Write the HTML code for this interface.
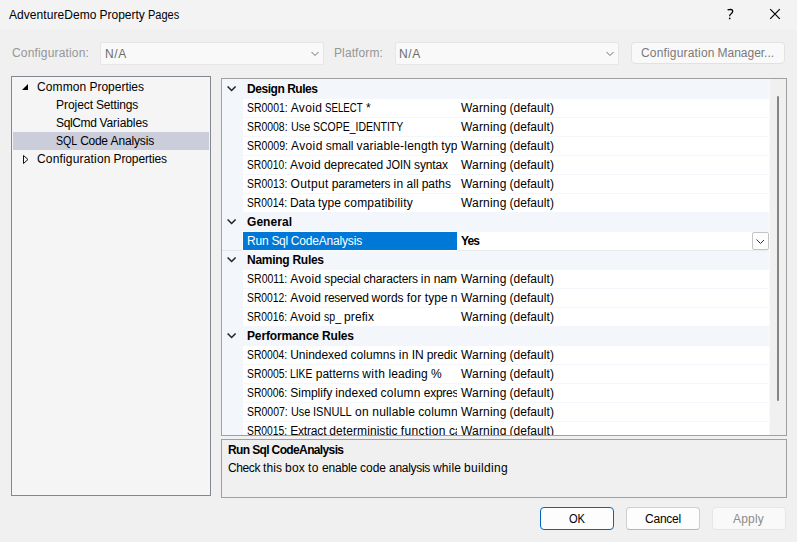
<!DOCTYPE html>
<html><head><meta charset="utf-8">
<style>
*{margin:0;padding:0;box-sizing:border-box}
html,body{width:797px;height:542px;overflow:hidden;background:#f0f0f0;font-family:"Liberation Sans",sans-serif;font-size:12px;color:#000;position:relative}
.a{position:absolute;white-space:nowrap}
.t{position:absolute;white-space:nowrap;line-height:18px;height:18px}
.combo{position:absolute;top:42px;height:23px;background:#f9f9f9;border:1px solid #e6e6e6;border-radius:2px}
.btn{position:absolute;border-radius:4px;background:#fdfdfd;border:1px solid #d0d0d0}
#tree{left:11px;top:76px;width:200px;height:420px;border:1px solid #828790;background:#f5f5f5}
#grid{left:221px;top:78px;width:566px;height:358px;border:1px solid #a0a0a0;background:#f3f6fb;overflow:hidden}
#desc{left:221px;top:439px;width:566px;height:59px;border:1px solid #a0a0a0;background:#f0f0f0}
.row{position:absolute;left:21px;width:526px;height:18px;background:#fff}
.nm{position:absolute;left:0;top:0;width:214px;height:18px;overflow:hidden}
.vl{position:absolute;left:215px;top:0;width:311px;height:18px;overflow:hidden}
.cat{position:absolute;left:0;width:547px;height:18px}
.w{position:absolute;top:0;display:inline-block;transform-origin:0 0;white-space:nowrap}
</style></head><body>

<div class="a" style="left:0;top:0;width:797px;height:30px;background:#f3f3f3"></div>
<div class="t" style="left:9px;top:6px;width:1px;"><span class="w" style="left:0.00px;letter-spacing:0.062px">AdventureDemo</span><span class="w" style="left:90.53px;letter-spacing:-0.010px">Property</span><span class="w" style="left:138.82px;transform:scaleX(0.9167)">Pages</span></div>
<svg class="a" style="left:722px;top:5px" width="18" height="18"><path d="M5.6 4.9Q7 4.3 8.7 4.3Q10.7 4.4 10.7 6.4Q10.6 7.8 8.9 8.9Q7.6 9.8 7.6 11.2" stroke="#000" stroke-width="1.25" fill="none"/><circle cx="7.7" cy="13.4" r="0.85" fill="#000"/></svg>
<svg class="a" style="left:769px;top:8px" width="12" height="12"><path d="M1.2 1.2L10.8 10.8M10.8 1.2L1.2 10.8" stroke="#000" stroke-width="1.2" fill="none"/></svg>
<div class="t" style="left:12px;top:44px;width:1px;color:#969696;"><span class="w" style="left:0.00px;letter-spacing:0.164px">Configuration:</span></div>
<div class="combo" style="left:100px;width:224px"></div>
<div class="t" style="left:105px;top:45px;width:1px;color:#6d6d6d;"><span class="w" style="left:0.00px;letter-spacing:0.667px">N/A</span></div>
<svg class="a" style="left:310px;top:50px" width="11" height="7"><path d="M1.5 2L5 5.5L8.5 2" stroke="#707070" stroke-width="1" fill="none"/></svg>
<div class="t" style="left:334px;top:44px;width:1px;color:#969696;"><span class="w" style="left:0.00px;letter-spacing:0.111px">Platform:</span></div>
<div class="combo" style="left:395px;width:224px"></div>
<div class="t" style="left:399px;top:45px;width:1px;color:#6d6d6d;"><span class="w" style="left:0.00px;letter-spacing:0.667px">N/A</span></div>
<svg class="a" style="left:605px;top:50px" width="11" height="7"><path d="M1.5 2L5 5.5L8.5 2" stroke="#707070" stroke-width="1" fill="none"/></svg>
<div class="btn" style="left:631px;top:42px;width:154px;height:22px;border-color:#e2e2e2;background:#f9f9f9"></div>
<div class="t" style="left:641px;top:44px;width:1px;color:#7a7a7a;"><span class="w" style="left:0.00px;letter-spacing:0.168px">Configuration</span><span class="w" style="left:76.58px;letter-spacing:-0.026px">Manager...</span></div>
<div id="tree" class="a">
<div class="a" style="left:1px;top:55px;width:196px;height:18px;background:#cbcdda"></div>
<svg class="a" style="left:9px;top:7px" width="8" height="8"><path d="M7 0L7 6L1 6Z" fill="#000"/></svg>
<div class="t" style="left:25px;top:1px;width:1px;"><span class="w" style="left:0.00px;letter-spacing:0.116px">Common</span><span class="w" style="left:52.47px;letter-spacing:-0.016px">Properties</span></div>
<div class="t" style="left:44px;top:19px;width:1px;"><span class="w" style="left:0.00px;letter-spacing:-0.049px">Project</span><span class="w" style="left:40.00px;letter-spacing:-0.168px">Settings</span></div>
<div class="t" style="left:44px;top:37px;width:1px;"><span class="w" style="left:0.00px;letter-spacing:-0.375px">SqlCmd</span><span class="w" style="left:43.47px;letter-spacing:-0.068px">Variables</span></div>
<div class="t" style="left:44px;top:55px;width:1px;"><span class="w" style="left:0.00px;transform:scaleX(0.8840)">SQL</span><span class="w" style="left:24.25px;letter-spacing:-0.352px">Code</span><span class="w" style="left:54.56px;letter-spacing:-0.156px">Analysis</span></div>
<svg class="a" style="left:10px;top:78px" width="8" height="10"><path d="M1.5 0.5L6 4.5L1.5 8.5Z" stroke="#111" stroke-width="1" fill="none"/></svg>
<div class="t" style="left:25px;top:73px;width:1px;"><span class="w" style="left:0.00px;letter-spacing:0.169px">Configuration</span><span class="w" style="left:76.59px;letter-spacing:-0.128px">Properties</span></div>
</div>
<div id="grid" class="a">
<div class="cat" style="top:1px"><svg class="a" style="left:5px;top:6px" width="11" height="7"><path d="M0.6 0.5L4.6 4.5L8.6 0.5" stroke="#222" stroke-width="1.5" fill="none"/></svg><div class="t" style="left:25px;top:0px;letter-spacing:-0.455px;font-weight:bold;">Design Rules</div></div>
<div class="row" style="top:20px"><div class="nm"><div class="t" style="left:4px;top:0px;width:1px;"><span class="w" style="left:0.00px;transform:scaleX(0.8708)">SR0001:</span><span class="w" style="left:43.70px;letter-spacing:0.342px">Avoid</span><span class="w" style="left:78.26px;transform:scaleX(0.8058)">SELECT</span><span class="w" style="left:118.92px;letter-spacing:0.410px">*</span></div></div><div class="vl"><div class="t" style="left:3px;top:0px;width:1px;"><span class="w" style="left:0.00px;letter-spacing:0.180px">Warning</span><span class="w" style="left:48.48px;letter-spacing:0.056px">(default)</span></div></div></div>
<div class="row" style="top:39px"><div class="nm"><div class="t" style="left:4px;top:0px;width:1px;"><span class="w" style="left:0.00px;transform:scaleX(0.8679)">SR0008:</span><span class="w" style="left:43.56px;transform:scaleX(0.9018)">Use</span><span class="w" style="left:65.84px;transform:scaleX(0.8725)">SCOPE_IDENTITY</span></div></div><div class="vl"><div class="t" style="left:3px;top:0px;width:1px;"><span class="w" style="left:0.00px;letter-spacing:0.180px">Warning</span><span class="w" style="left:48.48px;letter-spacing:0.056px">(default)</span></div></div></div>
<div class="row" style="top:58px"><div class="nm"><div class="t" style="left:4px;top:0px;width:1px;"><span class="w" style="left:0.00px;transform:scaleX(0.8764)">SR0009:</span><span class="w" style="left:43.99px;letter-spacing:0.383px">Avoid</span><span class="w" style="left:78.77px;letter-spacing:-0.079px">small</span><span class="w" style="left:109.45px;letter-spacing:0.208px">variable-length</span><span class="w" style="left:194.36px;letter-spacing:-0.006px">types</span></div></div><div class="vl"><div class="t" style="left:3px;top:0px;width:1px;"><span class="w" style="left:0.00px;letter-spacing:0.180px">Warning</span><span class="w" style="left:48.48px;letter-spacing:0.056px">(default)</span></div></div></div>
<div class="row" style="top:77px"><div class="nm"><div class="t" style="left:4px;top:0px;width:1px;"><span class="w" style="left:0.00px;transform:scaleX(0.8568)">SR0010:</span><span class="w" style="left:43.00px;letter-spacing:0.241px">Avoid</span><span class="w" style="left:77.00px;letter-spacing:-0.103px">deprecated</span><span class="w" style="left:139.00px;transform:scaleX(0.9148)">JOIN</span><span class="w" style="left:167.00px;letter-spacing:-0.112px">syntax</span></div></div><div class="vl"><div class="t" style="left:3px;top:0px;width:1px;"><span class="w" style="left:0.00px;letter-spacing:0.180px">Warning</span><span class="w" style="left:48.48px;letter-spacing:0.056px">(default)</span></div></div></div>
<div class="row" style="top:96px"><div class="nm"><div class="t" style="left:4px;top:0px;width:1px;"><span class="w" style="left:0.00px;transform:scaleX(0.8652)">SR0013:</span><span class="w" style="left:43.43px;letter-spacing:0.396px">Output</span><span class="w" style="left:84.83px;letter-spacing:-0.211px">parameters</span><span class="w" style="left:146.44px;letter-spacing:0.378px">in</span><span class="w" style="left:159.56px;letter-spacing:0.034px">all</span><span class="w" style="left:174.71px;letter-spacing:-0.011px">paths</span></div></div><div class="vl"><div class="t" style="left:3px;top:0px;width:1px;"><span class="w" style="left:0.00px;letter-spacing:0.180px">Warning</span><span class="w" style="left:48.48px;letter-spacing:0.056px">(default)</span></div></div></div>
<div class="row" style="top:115px"><div class="nm"><div class="t" style="left:4px;top:0px;width:1px;"><span class="w" style="left:0.00px;transform:scaleX(0.8568)">SR0014:</span><span class="w" style="left:43.00px;letter-spacing:-0.086px">Data</span><span class="w" style="left:71.00px;letter-spacing:0.082px">type</span><span class="w" style="left:97.00px;letter-spacing:0.228px">compatibility</span></div></div><div class="vl"><div class="t" style="left:3px;top:0px;width:1px;"><span class="w" style="left:0.00px;letter-spacing:0.180px">Warning</span><span class="w" style="left:48.48px;letter-spacing:0.056px">(default)</span></div></div></div>
<div class="cat" style="top:134px"><svg class="a" style="left:5px;top:6px" width="11" height="7"><path d="M0.6 0.5L4.6 4.5L8.6 0.5" stroke="#222" stroke-width="1.5" fill="none"/></svg><div class="t" style="left:25px;top:0px;letter-spacing:0.055px;font-weight:bold;">General</div></div>
<div class="a" style="left:20px;top:152px;width:215px;height:20px;background:#fff"></div><div class="a" style="left:0;top:171px;width:20px;height:1px;background:#e6e6e6"></div><div class="a" style="left:236px;top:171px;width:311px;height:1px;background:#ebebeb"></div>
<div class="row" style="top:153px"><div class="nm" style="background:#0078d7;color:#fff"><div class="t" style="left:4px;top:0px;width:1px;"><span class="w" style="left:0.00px;letter-spacing:-0.215px">Run</span><span class="w" style="left:24.42px;letter-spacing:-0.354px">Sql</span><span class="w" style="left:43.76px;letter-spacing:-0.178px">CodeAnalysis</span></div></div><div class="vl"><div class="t" style="left:3px;top:0px;letter-spacing:-0.844px;font-weight:bold;">Yes</div></div><div class="a" style="left:509px;top:0;width:17px;height:18px;border:1px solid #c4c4c4;border-radius:2px;background:#fdfdfd"></div><svg class="a" style="left:512px;top:6px" width="11" height="7"><path d="M1.5 1.5L5.5 5.5L9 2" stroke="#333" stroke-width="1" fill="none"/></svg></div>
<div class="cat" style="top:172px"><svg class="a" style="left:5px;top:6px" width="11" height="7"><path d="M0.6 0.5L4.6 4.5L8.6 0.5" stroke="#222" stroke-width="1.5" fill="none"/></svg><div class="t" style="left:25px;top:0px;letter-spacing:-0.273px;font-weight:bold;">Naming Rules</div></div>
<div class="row" style="top:191px"><div class="nm"><div class="t" style="left:4px;top:0px;width:1px;"><span class="w" style="left:0.00px;transform:scaleX(0.8774)">SR0011:</span><span class="w" style="left:43.20px;letter-spacing:0.269px">Avoid</span><span class="w" style="left:77.35px;letter-spacing:-0.171px">special</span><span class="w" style="left:116.53px;letter-spacing:-0.177px">characters</span><span class="w" style="left:173.79px;letter-spacing:0.351px">in</span><span class="w" style="left:186.85px;letter-spacing:-0.372px">names</span></div></div><div class="vl"><div class="t" style="left:3px;top:0px;width:1px;"><span class="w" style="left:0.00px;letter-spacing:0.180px">Warning</span><span class="w" style="left:48.48px;letter-spacing:0.056px">(default)</span></div></div></div>
<div class="row" style="top:210px"><div class="nm"><div class="t" style="left:4px;top:0px;width:1px;"><span class="w" style="left:0.00px;transform:scaleX(0.8604)">SR0012:</span><span class="w" style="left:43.18px;letter-spacing:0.267px">Avoid</span><span class="w" style="left:77.32px;letter-spacing:-0.313px">reserved</span><span class="w" style="left:124.52px;letter-spacing:0.024px">words</span><span class="w" style="left:159.67px;letter-spacing:0.354px">for</span><span class="w" style="left:177.75px;letter-spacing:0.106px">type</span><span class="w" style="left:203.86px;letter-spacing:-0.374px">names</span></div></div><div class="vl"><div class="t" style="left:3px;top:0px;width:1px;"><span class="w" style="left:0.00px;letter-spacing:0.180px">Warning</span><span class="w" style="left:48.48px;letter-spacing:0.056px">(default)</span></div></div></div>
<div class="row" style="top:229px"><div class="nm"><div class="t" style="left:4px;top:0px;width:1px;"><span class="w" style="left:0.00px;transform:scaleX(0.8568)">SR0016:</span><span class="w" style="left:43.00px;letter-spacing:0.241px">Avoid</span><span class="w" style="left:77.00px;transform:scaleX(0.8788)">sp_</span><span class="w" style="left:97.00px;letter-spacing:0.109px">prefix</span></div></div><div class="vl"><div class="t" style="left:3px;top:0px;width:1px;"><span class="w" style="left:0.00px;letter-spacing:0.180px">Warning</span><span class="w" style="left:48.48px;letter-spacing:0.056px">(default)</span></div></div></div>
<div class="cat" style="top:248px"><svg class="a" style="left:5px;top:6px" width="11" height="7"><path d="M0.6 0.5L4.6 4.5L8.6 0.5" stroke="#222" stroke-width="1.5" fill="none"/></svg><div class="t" style="left:25px;top:0px;letter-spacing:-0.147px;font-weight:bold;">Performance Rules</div></div>
<div class="row" style="top:267px"><div class="nm"><div class="t" style="left:4px;top:0px;width:1px;"><span class="w" style="left:0.00px;transform:scaleX(0.8604)">SR0004:</span><span class="w" style="left:43.18px;letter-spacing:-0.014px">Unindexed</span><span class="w" style="left:103.44px;letter-spacing:0.072px">columns</span><span class="w" style="left:151.65px;letter-spacing:0.350px">in</span><span class="w" style="left:164.70px;letter-spacing:0.026px">IN</span><span class="w" style="left:179.77px;letter-spacing:-0.113px">predicates</span></div></div><div class="vl"><div class="t" style="left:3px;top:0px;width:1px;"><span class="w" style="left:0.00px;letter-spacing:0.180px">Warning</span><span class="w" style="left:48.48px;letter-spacing:0.056px">(default)</span></div></div></div>
<div class="row" style="top:286px"><div class="nm"><div class="t" style="left:4px;top:0px;width:1px;"><span class="w" style="left:0.00px;transform:scaleX(0.8657)">SR0005:</span><span class="w" style="left:43.45px;transform:scaleX(0.8550)">LIKE</span><span class="w" style="left:68.71px;letter-spacing:0.013px">patterns</span><span class="w" style="left:115.19px;letter-spacing:0.474px">with</span><span class="w" style="left:141.47px;letter-spacing:0.101px">leading</span><span class="w" style="left:183.91px;letter-spacing:-1.578px">%</span></div></div><div class="vl"><div class="t" style="left:3px;top:0px;width:1px;"><span class="w" style="left:0.00px;letter-spacing:0.180px">Warning</span><span class="w" style="left:48.48px;letter-spacing:0.056px">(default)</span></div></div></div>
<div class="row" style="top:305px"><div class="nm"><div class="t" style="left:4px;top:0px;width:1px;"><span class="w" style="left:0.00px;transform:scaleX(0.8604)">SR0006:</span><span class="w" style="left:43.18px;letter-spacing:0.020px">Simplify</span><span class="w" style="left:88.37px;letter-spacing:0.021px">indexed</span><span class="w" style="left:133.56px;letter-spacing:0.247px">column</span><span class="w" style="left:176.74px;letter-spacing:-0.252px">expressions</span></div></div><div class="vl"><div class="t" style="left:3px;top:0px;width:1px;"><span class="w" style="left:0.00px;letter-spacing:0.180px">Warning</span><span class="w" style="left:48.48px;letter-spacing:0.056px">(default)</span></div></div></div>
<div class="row" style="top:324px"><div class="nm"><div class="t" style="left:4px;top:0px;width:1px;"><span class="w" style="left:0.00px;transform:scaleX(0.8728)">SR0007:</span><span class="w" style="left:43.81px;transform:scaleX(0.9069)">Use</span><span class="w" style="left:66.22px;transform:scaleX(0.9214)">ISNULL</span><span class="w" style="left:107.99px;letter-spacing:0.460px">on</span><span class="w" style="left:125.31px;letter-spacing:0.177px">nullable</span><span class="w" style="left:171.15px;letter-spacing:0.165px">columns</span></div></div><div class="vl"><div class="t" style="left:3px;top:0px;width:1px;"><span class="w" style="left:0.00px;letter-spacing:0.180px">Warning</span><span class="w" style="left:48.48px;letter-spacing:0.056px">(default)</span></div></div></div>
<div class="row" style="top:343px"><div class="nm"><div class="t" style="left:4px;top:0px;width:1px;"><span class="w" style="left:0.00px;transform:scaleX(0.8606)">SR0015:</span><span class="w" style="left:43.19px;letter-spacing:-0.167px">Extract</span><span class="w" style="left:82.37px;letter-spacing:0.073px">deterministic</span><span class="w" style="left:153.68px;letter-spacing:0.398px">function</span><span class="w" style="left:201.90px;letter-spacing:-0.183px">calls</span></div></div><div class="vl"><div class="t" style="left:3px;top:0px;width:1px;"><span class="w" style="left:0.00px;letter-spacing:0.180px">Warning</span><span class="w" style="left:48.48px;letter-spacing:0.056px">(default)</span></div></div></div>
<div class="a" style="left:547px;top:0;width:1px;height:356px;background:#f9f9f9"></div>
<div class="a" style="left:548px;top:0;width:16px;height:356px;background:#f0f0f0"></div>
<div class="a" style="left:555px;top:17px;width:2px;height:305px;background:#858585;border-radius:1px"></div>
</div>
<div id="desc" class="a">
<div class="t" style="left:6px;top:1px;letter-spacing:-0.631px;font-weight:bold;">Run Sql CodeAnalysis</div>
<div class="t" style="left:6px;top:19px;width:1px;"><span class="w" style="left:0.00px;letter-spacing:-0.403px">Check</span><span class="w" style="left:35.00px;letter-spacing:0.082px">this</span><span class="w" style="left:57.00px;letter-spacing:0.219px">box</span><span class="w" style="left:80.00px;letter-spacing:0.500px">to</span><span class="w" style="left:94.00px;letter-spacing:-0.172px">enable</span><span class="w" style="left:132.00px;letter-spacing:-0.004px">code</span><span class="w" style="left:161.00px;letter-spacing:-0.295px">analysis</span><span class="w" style="left:205.00px;letter-spacing:0.128px">while</span><span class="w" style="left:236.00px;letter-spacing:0.328px">building</span></div>
</div>
<div class="btn" style="left:540px;top:507px;width:74px;height:23px;border:1px solid #0067c0"></div>
<div class="t" style="left:569px;top:510px;width:1px;"><span class="w" style="left:0.00px;transform:scaleX(0.9234)">OK</span></div>
<div class="btn" style="left:626px;top:507px;width:74px;height:23px;border-color:#cfcfcf;border-bottom-color:#b5b5b5"></div>
<div class="t" style="left:645px;top:510px;width:1px;"><span class="w" style="left:0.00px;letter-spacing:-0.227px">Cancel</span></div>
<div class="btn" style="left:712px;top:507px;width:74px;height:23px;border-color:#e6e6e6;background:#f9f9f9"></div>
<div class="t" style="left:733px;top:510px;width:1px;color:#8c8c8c;"><span class="w" style="left:0.00px;letter-spacing:0.197px">Apply</span></div>
</body></html>
